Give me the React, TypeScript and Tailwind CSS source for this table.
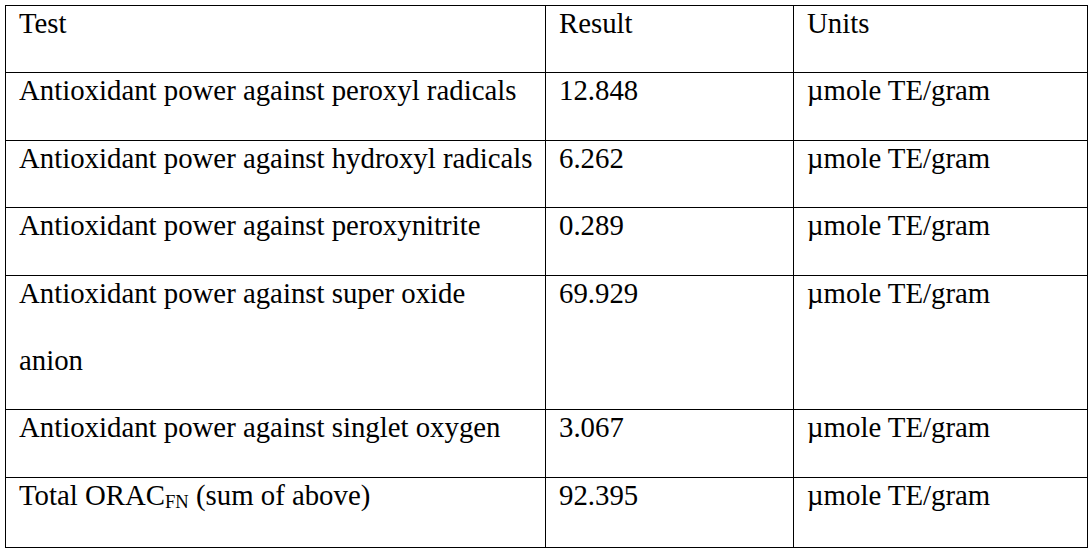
import * as React from "react"

interface ResultRow {
  test: React.ReactNode
  result: string
  units: string
}

const rows: ResultRow[] = [
  { test: "Antioxidant power against peroxyl radicals", result: "12.848", units: "µmole TE/gram" },
  { test: "Antioxidant power against hydroxyl radicals", result: "6.262", units: "µmole TE/gram" },
  { test: "Antioxidant power against peroxynitrite", result: "0.289", units: "µmole TE/gram" },
  {
    test: (
      <>
        Antioxidant power against super oxide
        <br />
        anion
      </>
    ),
    result: "69.929",
    units: "µmole TE/gram",
  },
  { test: "Antioxidant power against singlet oxygen", result: "3.067", units: "µmole TE/gram" },
  {
    test: (
      <>
        Total ORAC
        <span className="relative top-[3px] text-[18.6px]">FN</span> (sum of above)
      </>
    ),
    result: "92.395",
    units: "µmole TE/gram",
  },
]

function Cell({ children }: { children: React.ReactNode }) {
  return (
    <td className="border border-black pl-[13px] pr-[6px] pt-0 pb-[15px] align-top whitespace-nowrap">
      <div className="-mt-[16px] leading-[67.4px]">{children}</div>
    </td>
  )
}

export default function App() {
  return (
    <div className="min-h-[549px] w-[1090px] bg-white pt-[5px] pl-[5px] font-['Liberation_Serif','Times_New_Roman',serif] text-black">
      <table className="w-[1082px] table-fixed border-collapse text-[28.8px]">
        <colgroup>
          <col className="w-[540px]" />
          <col className="w-[248px]" />
          <col className="w-[294px]" />
        </colgroup>
        <tbody>
          <tr>
            <Cell>Test</Cell>
            <Cell>Result</Cell>
            <Cell>Units</Cell>
          </tr>
          {rows.map((row, i) => (
            <tr key={i}>
              <Cell>{row.test}</Cell>
              <Cell>{row.result}</Cell>
              <Cell>{row.units}</Cell>
            </tr>
          ))}
        </tbody>
      </table>
    </div>
  )
}
